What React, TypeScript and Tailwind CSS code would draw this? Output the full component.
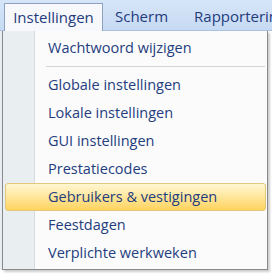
const items = [
  'Globale instellingen',
  'Lokale instellingen',
  'GUI instellingen',
  'Prestatiecodes',
  'Gebruikers & vestigingen',
  'Feestdagen',
  'Verplichte werkweken',
];

function MenuItem({ label, active }: { label: string; active?: boolean }) {
  return (
    <div className="relative h-[28px] flex items-center">
      {active && (
        <div className="absolute inset-y-0 left-[2px] right-[1px] rounded-[3px] border border-[#e3c77a] bg-gradient-to-b from-[#fff6d2] via-[#ffe69a] to-[#ffd35c]" />
      )}
      <span className="relative pl-[45px] text-[#243d7e]">{label}</span>
    </div>
  );
}

export default function App() {
  return (
    <div className="w-[272px] h-[277px] bg-white overflow-hidden text-[14.5px] leading-none" style={{ fontFamily: '"Open Sans", "Noto Sans", sans-serif' }}>
      <div className="h-[31px] bg-gradient-to-b from-[#d6e5f8] to-[#c6daf3] border-b border-[#a9c0de] flex items-end pl-[4px] text-[15px]">
        <div className="shrink-0 h-[28px] w-[99px] bg-[#f6f8fb] border border-b-0 border-[#8ea3bf] flex items-center justify-center text-[#233b7c] -mb-px">
          Instellingen
        </div>
        <div className="shrink-0 h-[28px] flex items-center pl-[12px] text-[#233b7c]">Scherm</div>
        <div className="shrink-0 h-[28px] flex items-center pl-[26px] text-[#233b7c] whitespace-nowrap">Rapportering</div>
      </div>
      <div className="flex">
        <div className="shrink-0 w-[2px] h-[239px] bg-[#e8edf3]" />
        <div className="shrink-0 relative w-[266px] h-[239px] border border-t-0 border-[#8a8a8a] bg-[#fbfbfb] shadow-[2px_2px_2px_rgba(0,0,0,0.2)]">
          <div className="absolute left-0 top-0 bottom-0 w-[32px] bg-[#e9eef0] border-r border-[#d9dcde]" />
          <div className="relative pt-[3px]">
            <MenuItem label="Wachtwoord wijzigen" />
            <div className="h-[9px] flex items-center pl-[43px] pr-[2px]">
              <div className="h-px w-full bg-[#d4d4d4]" />
            </div>
            {items.map((label) => (
              <MenuItem key={label} label={label} active={label === 'Gebruikers & vestigingen'} />
            ))}
          </div>
        </div>
      </div>
    </div>
  );
}
